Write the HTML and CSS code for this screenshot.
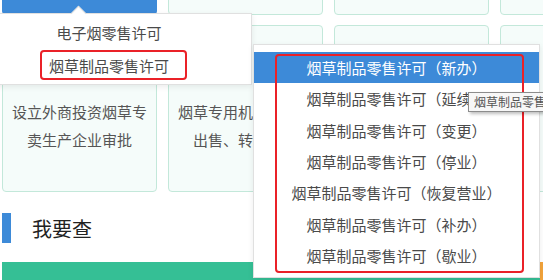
FILE: index.html
```html
<!DOCTYPE html>
<html>
<head>
  <meta charset="utf-8">
  <link rel="stylesheet" href="styles.css">
</head>
<body>
  <div class="page">
    <div class="cards">
      <div class="card card-top active"></div>
      <div class="card card-top"></div>
      <div class="card card-top"></div>
      <div class="card card-top"></div>
      <div class="card card-tall"><p>设立外商投资烟草专卖生产企业审批</p></div>
      <div class="card card-tall"><p>烟草专用机械购进、出售、转让审批</p></div>
      <div class="card card-tall"></div>
      <div class="card card-tall"></div>
    </div>

    <h2 class="section-title">我要查</h2>

    <div class="bars">
      <div class="bar-green"></div>
      <div class="bar-orange"></div>
    </div>
  </div>

  <div class="menu menu-main">
    <div class="menu-item">电子烟零售许可</div>
    <div class="menu-item">烟草制品零售许可</div>
  </div>
  <div class="mark mark-main"></div>

  <div class="menu menu-sub">
    <div class="menu-item selected">烟草制品零售许可（新办）</div>
    <div class="menu-item">烟草制品零售许可（延续）</div>
    <div class="menu-item">烟草制品零售许可（变更）</div>
    <div class="menu-item">烟草制品零售许可（停业）</div>
    <div class="menu-item">烟草制品零售许可（恢复营业）</div>
    <div class="menu-item">烟草制品零售许可（补办）</div>
    <div class="menu-item">烟草制品零售许可（歇业）</div>
  </div>
  <div class="mark mark-sub"></div>

  <div class="tooltip">烟草制品零售许可（延续）</div>
</body>
</html>
```

FILE: styles.css
```css
body {
  margin: 0;
  padding: 0;
  width: 543px;
  height: 280px;
  overflow: hidden;
  position: relative;
  background: #fff;
  font-family: "Noto Sans CJK SC", "Noto Sans", sans-serif;
}

.page {
  padding-left: 2px;
}

.cards {
  display: grid;
  grid-template-columns: repeat(4, 155px);
  column-gap: 11px;
  row-gap: 10px;
  margin-top: -45px;
}

.card {
  box-sizing: border-box;
  background: #f5fcfa;
  border: 1px solid #c3e8da;
  border-radius: 4px;
}

.card-top {
  height: 60px;
}

.card.active {
  background: #3d8ad8;
  border-color: #3d8ad8;
}

.card-tall {
  height: 167px;
  display: flex;
  flex-direction: column;
  justify-content: flex-end;
  padding: 0 8px 37px;
}

.card p {
  margin: 0;
  font-size: 15px;
  line-height: 28px;
  color: #555;
  text-align: center;
}

.section-title {
  margin: 21px 0 0;
  height: 30px;
  display: flex;
  align-items: center;
  border-left: 9px solid #3d8ad8;
  padding-left: 21px;
  font-size: 20px;
  font-weight: normal;
  color: #222;
}

.bars {
  display: flex;
  margin-top: 19px;
}

.bar-green {
  width: 538px;
  height: 20px;
  background: #35bf95;
  flex-shrink: 0;
}

.bar-orange {
  width: 40px;
  height: 20px;
  background: #f3a43b;
  flex-shrink: 0;
}

.menu {
  position: absolute;
  background: #fff;
  border: 1px solid #e0e0e0;
  box-shadow: 0 2px 6px rgba(0, 0, 0, 0.08);
  font-size: 15px;
  color: #4a4a4a;
  text-align: center;
}

.menu-main {
  left: -34px;
  top: 13px;
  width: 284px;
  padding: 2px 0;
}

.menu-main::before {
  content: "";
  position: absolute;
  left: 106px;
  top: -6px;
  width: 10px;
  height: 10px;
  background: #fff;
  border-left: 1px solid #e0e0e0;
  border-top: 1px solid #e0e0e0;
  transform: rotate(45deg);
}

.menu-main .menu-item {
  height: 33px;
  line-height: 33px;
  position: relative;
}

.menu-sub {
  left: 253px;
  top: 44px;
  width: 285px;
  padding: 7px 0 6px;
}

.menu-sub .menu-item {
  height: 31.33px;
  line-height: 31px;
  white-space: nowrap;
}

.menu-item.selected {
  background: #3d8ad8;
  color: #fff;
}

.mark {
  position: absolute;
  box-sizing: border-box;
  border: 2px solid #ea2128;
  border-radius: 4px;
}

.mark-main {
  left: 40px;
  top: 50px;
  width: 147px;
  height: 30px;
}

.mark-sub {
  left: 275px;
  top: 54px;
  width: 249px;
  height: 219px;
}

.tooltip {
  position: absolute;
  left: 468px;
  top: 92px;
  height: 18px;
  line-height: 18px;
  padding: 0 5px;
  font-size: 12px;
  color: #555;
  background: #f7f7f7;
  border: 1px solid #8c8c8c;
  box-shadow: 2px 2px 3px rgba(0, 0, 0, 0.25);
  white-space: nowrap;
}
```
